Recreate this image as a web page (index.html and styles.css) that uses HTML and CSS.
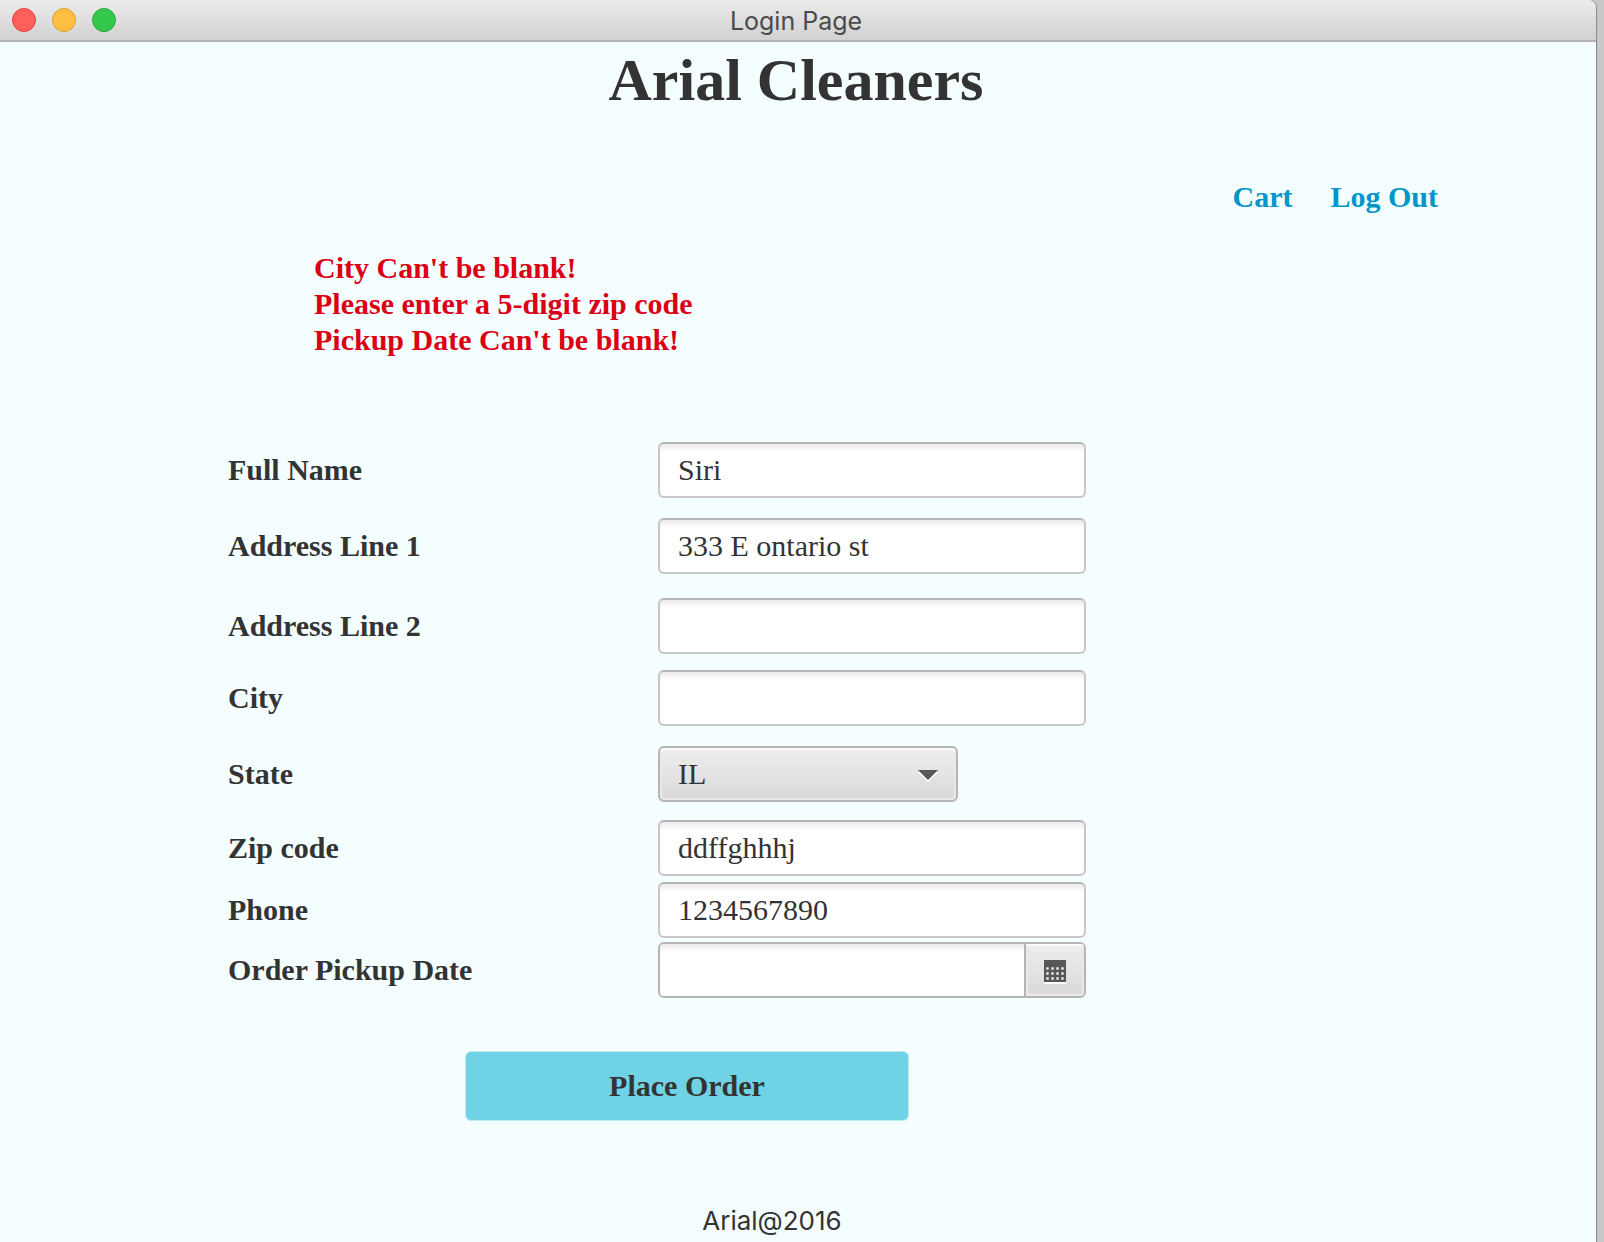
FILE: index.html
```html
<!DOCTYPE html>
<html lang="en">
<head>
<meta charset="utf-8">
<title>Login Page</title>
<link rel="stylesheet" href="styles.css">
</head>
<body>
<div class="window">
  <header class="titlebar">
    <div class="lights">
      <button class="light light-close" type="button" aria-label="Close"></button>
      <button class="light light-minimize" type="button" aria-label="Minimize"></button>
      <button class="light light-zoom" type="button" aria-label="Zoom"></button>
    </div>
    <span class="titlebar-text">Login Page</span>
  </header>
  <main class="content">
    <h1 class="brand">Arial Cleaners</h1>
    <nav class="links">
      <a href="#cart">Cart</a>
      <a href="#logout">Log Out</a>
    </nav>
    <div class="errors" role="alert">
      <p>City Can't be blank!</p>
      <p>Please enter a 5-digit zip code</p>
      <p>Pickup Date Can't be blank!</p>
    </div>
    <form class="form">
      <div class="row">
        <label for="name">Full Name</label>
        <input class="field" id="name" type="text" value="Siri">
      </div>
      <div class="row row-loose">
        <label for="address1">Address Line 1</label>
        <input class="field" id="address1" type="text" value="333 E ontario st">
      </div>
      <div class="row row-snug">
        <label for="address2">Address Line 2</label>
        <input class="field" id="address2" type="text">
      </div>
      <div class="row">
        <label for="city">City</label>
        <input class="field" id="city" type="text">
      </div>
      <div class="row row-medium">
        <label for="state">State</label>
        <div class="combo">
          <select class="combo-select" id="state"><option>IL</option></select>
          <svg class="combo-arrow" width="20" height="16" viewBox="0 0 20 16" aria-hidden="true">
            <path d="M0 6H20L10 16Z" fill="#fff"/>
            <path d="M0 4H20L10 14Z" fill="#575757"/>
          </svg>
        </div>
      </div>
      <div class="row row-tight">
        <label for="zip">Zip code</label>
        <input class="field" id="zip" type="text" value="ddffghhhj">
      </div>
      <div class="row row-tightest">
        <label for="phone">Phone</label>
        <input class="field" id="phone" type="text" value="1234567890">
      </div>
      <div class="row row-last">
        <label for="pickup">Order Pickup Date</label>
        <div class="date">
          <input class="date-input" id="pickup" type="text">
          <button class="date-button" type="button" aria-label="Choose date">
            <svg width="22" height="28" viewBox="0 0 22 28" aria-hidden="true">
              <rect y="6" width="22" height="22" fill="#fff"/>
              <rect y="4" width="22" height="22" fill="#575757"/>
              <path d="M2.300 12.500H20M2.300 17.500H20M2.300 22.500H20" stroke="#eee" stroke-width="2.400" stroke-dasharray="2.400 2.600"/>
            </svg>
          </button>
        </div>
      </div>
      <button class="submit" type="submit">Place Order</button>
    </form>
    <footer class="footer">Arial@2016</footer>
  </main>
</div>
</body>
</html>
```
FILE: styles.css
```css
* {
  box-sizing: border-box;
}

body {
  margin: 0;
  min-height: 100vh;
  padding-right: 8px;
  background: #c9c9c9;
  color: #333;
  font: 30px/36px "Liberation Serif", "Times New Roman", serif;
}

h1, p {
  margin: 0;
}

input, select, button {
  margin: 0;
  color: inherit;
  font: inherit;
}

.window {
  display: flex;
  flex-direction: column;
  min-height: 100vh;
  border-top-right-radius: 8px;
  box-shadow: 1px 0 1px #858585;
  background: #f4feff;
}

.titlebar {
  display: grid;
  grid-template-columns: 1fr auto 1fr;
  align-items: center;
  height: 42px;
  padding-right: 4px;
  border-bottom: 2px solid #b2b2b2;
  border-top-right-radius: 8px;
  background: linear-gradient(#ececec, #d1d1d1);
}

.lights {
  display: flex;
  gap: 16px;
  padding-left: 12px;
}

.light {
  width: 24px;
  height: 24px;
  padding: 0;
  border: 1px solid;
  border-radius: 50%;
}

.light-close {
  border-color: #e2443f;
  background: #fc605b;
}

.light-minimize {
  border-color: #de9f34;
  background: #fdbe41;
}

.light-zoom {
  border-color: #27aa35;
  background: #34c84a;
}

.titlebar-text {
  padding-top: 2px;
  color: #4b4b4b;
  font: 25px/32px Inter, sans-serif;
}

.content {
  flex: 1;
  display: flex;
  flex-direction: column;
}

.brand {
  padding: 4px 4px 0 0;
  font-size: 60px;
  line-height: 68px;
  text-align: center;
}

.links {
  display: flex;
  justify-content: flex-end;
  gap: 38px;
  margin-top: 65px;
  padding-right: 158px;
  font-weight: bold;
}

.links a {
  color: #0096c9;
  text-decoration: none;
}

.errors {
  margin-top: 35px;
  padding-left: 314px;
  color: #dc0014;
  font-weight: bold;
}

.form {
  display: flex;
  flex-direction: column;
  margin-top: 84px;
  padding: 0 510px 0 228px;
}

.row {
  display: grid;
  grid-template-columns: 430px 1fr;
  align-items: center;
  margin-bottom: 20px;
}

.row-loose {
  margin-bottom: 24px;
}

.row-medium {
  margin-bottom: 18px;
}

.row-snug {
  margin-bottom: 16px;
}

.row-tight {
  margin-bottom: 6px;
}

.row-tightest {
  margin-bottom: 4px;
}

.row-last {
  margin-bottom: 53px;
}

.row label {
  font-weight: bold;
}

.field {
  width: 100%;
  height: 56px;
  padding: 0 18px;
  border: 2px solid #c8c8c8;
  border-top-color: #b5b5b5;
  border-radius: 6px;
  background: linear-gradient(#ebebeb, #fff 8px);
}

.combo {
  display: grid;
  align-items: center;
  width: 300px;
}

.combo-select,
.combo-arrow {
  grid-area: 1 / 1;
}

.combo-select {
  width: 100%;
  height: 56px;
  padding: 0 18px;
  appearance: none;
  border: 2px solid #b5b5b5;
  border-radius: 6px;
  box-shadow: inset 0 2px #fbfbfb, inset 0 0 0 2px #e9e9e9;
  background: linear-gradient(#eee, #d9d9d9);
}

.combo-arrow {
  justify-self: end;
  margin-right: 20px;
  pointer-events: none;
}

.date {
  display: flex;
  height: 56px;
  overflow: hidden;
  border: 2px solid #b5b5b5;
  border-radius: 6px;
}

.date-input {
  flex: 1;
  min-width: 0;
  padding: 0 18px;
  border: 0;
  background: linear-gradient(#ebebeb, #fff 8px);
}

.date-button {
  display: flex;
  align-items: center;
  justify-content: center;
  width: 60px;
  padding: 0;
  border: 0;
  border-left: 2px solid #b5b5b5;
  box-shadow: inset 0 2px #fbfbfb, inset 0 0 0 2px #e9e9e9;
  background: linear-gradient(#eee, #d9d9d9);
}

.submit {
  align-self: center;
  width: 444px;
  height: 70px;
  margin-left: 60px;
  border: 1px solid #b8edf4;
  border-radius: 6px;
  background: #6fd3e5;
  font-weight: bold;
}

.footer {
  margin-top: 84px;
  padding-right: 52px;
  font: 26px/32px Inter, sans-serif;
  text-align: center;
}
```
